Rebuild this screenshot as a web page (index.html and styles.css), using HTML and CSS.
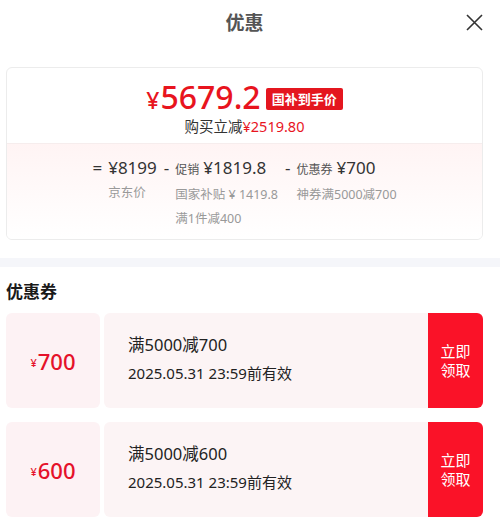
FILE: index.html
```html
<!DOCTYPE html>
<html lang="zh-CN">
<head>
    <meta charset="utf-8"/>
    <title>优惠</title>
    <link rel="stylesheet" href="styles.css">
</head>
<body>

<div class="wrap">
    <div class="header">
        <span></span>
        <div class="title">优惠</div>
        <a href="#" class="close" title="关闭">
            <svg width="17" height="17" viewBox="0 0 17 17">
                <path d="M1 1 L16 16 M16 1 L1 16" stroke="#333" stroke-width="1.6" fill="none"/>
            </svg>
        </a>
    </div>

    <div class="priceCard">
        <div class="priceTop">
            <div class="priceLine">
                <span class="bigPrice"><span class="yen">¥</span>5679.2</span>
                <span class="badge">国补到手价</span>
            </div>
            <div class="saveLine">购买立减<span class="red">¥2519.80</span></div>
        </div>
        <div class="priceBottom">
            <div class="calc">
                <div class="calcCol">
                    <span class="sign">=</span>
                    <div class="calcBody">
                        <div class="calcMain"><span class="amt">¥8199</span></div>
                        <div class="calcSub">京东价</div>
                    </div>
                </div>
                <div class="calcCol">
                    <span class="sign">-</span>
                    <div class="calcBody">
                        <div class="calcMain"><span class="lbl">促销</span><span class="amt">¥1819.8</span></div>
                        <div class="calcSub">国家补贴 ¥ 1419.8</div>
                        <div class="calcSub">满1件减400</div>
                    </div>
                </div>
                <div class="calcCol">
                    <span class="sign">-</span>
                    <div class="calcBody">
                        <div class="calcMain"><span class="lbl">优惠券</span><span class="amt">¥700</span></div>
                        <div class="calcSub">神券满5000减700</div>
                    </div>
                </div>
            </div>
        </div>
    </div>
</div>

<div class="strip"></div>

<div class="wrap">
    <div class="sectionTitle">优惠券</div>

    <div class="coupon">
        <div class="stub"><span class="cYen">¥</span><span class="cAmt">700</span></div>
        <div class="cMain">
            <div class="cName">满5000减700</div>
            <div class="cDate">2025.05.31 23:59前有效</div>
        </div>
        <a href="#" class="cBtn">立即<br>领取</a>
    </div>

    <div class="coupon">
        <div class="stub"><span class="cYen">¥</span><span class="cAmt">600</span></div>
        <div class="cMain">
            <div class="cName">满5000减600</div>
            <div class="cDate">2025.05.31 23:59前有效</div>
        </div>
        <a href="#" class="cBtn">立即<br>领取</a>
    </div>
</div>

</body>
</html>
```

FILE: styles.css
```css
body {
    margin: 0;
    font-family: "Noto Sans", "Noto Sans CJK SC", sans-serif;
    color: #333;
    background: #fff;
}

.wrap {
    padding: 0 17px 0 6px;
}

.header {
    display: grid;
    grid-template-columns: 1fr auto 1fr;
    align-items: center;
    height: 44px;
}

.title {
    font-size: 19px;
    font-weight: bold;
    color: #555;
}

.close {
    justify-self: end;
    display: flex;
    margin-top: 1px;
}

.priceCard {
    margin-top: 23px;
    border: 1px solid #ececec;
    border-radius: 6px;
    overflow: hidden;
}

.priceTop {
    padding: 12px 0 7px;
    text-align: center;
    border-bottom: 1px solid #f6eded;
}

.priceLine {
    display: flex;
    justify-content: center;
    align-items: center;
    height: 36px;
    gap: 5px;
}

.bigPrice {
    color: #e8141e;
    font-size: 32px;
    font-weight: 500;
    line-height: 36px;
}

.yen {
    font-size: 23px;
    margin-right: 1px;
}

.badge {
    background: #e4161f;
    color: #fff;
    font-size: 13px;
    font-weight: bold;
    line-height: 22px;
    padding: 0 6px;
    border-radius: 2px;
    margin-top: 2px;
}

.saveLine {
    font-size: 14.5px;
    line-height: 20px;
}

.red {
    color: #e8141e;
}

.priceBottom {
    background: linear-gradient(#fff4f4, #fff);
    padding: 13px 0 8px;
}

.calc {
    display: flex;
    justify-content: center;
    gap: 7px;
}

.calcCol {
    display: flex;
    align-items: flex-start;
}

.sign {
    font-size: 17px;
    line-height: 22px;
    margin-right: 6px;
    color: #333;
}

.calcMain {
    line-height: 22px;
    white-space: nowrap;
    margin-bottom: 2px;
}

.lbl {
    font-size: 12px;
    color: #555;
    margin-right: 4px;
}

.amt {
    font-size: 17px;
}

.calcSub {
    font-size: 12.5px;
    line-height: 24px;
    color: #999;
    white-space: nowrap;
}

.strip {
    height: 9px;
    background: #f5f6fa;
    margin-top: 18px;
}

.sectionTitle {
    font-size: 17px;
    font-weight: bold;
    color: #1a1a1a;
    line-height: 24px;
    padding-top: 13px;
    margin-bottom: 9px;
}

.coupon {
    display: flex;
    height: 95px;
    margin-bottom: 14px;
}

.stub {
    width: 94px;
    background: #fdf2f4;
    border-radius: 6px;
    display: flex;
    justify-content: center;
    align-items: center;
    color: #e5122a;
    margin-right: 4px;
}

.cYen {
    font-size: 11px;
    font-weight: 500;
    margin-top: 4px;
    margin-right: 1px;
}

.cAmt {
    font-size: 22px;
    font-weight: 500;
}

.cMain {
    flex: 1;
    background: #fcf4f5;
    border-radius: 6px 0 0 6px;
    padding: 0 0 3px 24px;
    display: flex;
    flex-direction: column;
    justify-content: center;
}

.cName {
    font-size: 16.5px;
    line-height: 28px;
    color: #222;
}

.cDate {
    font-size: 15px;
    line-height: 28px;
    color: #222;
}

.cBtn {
    width: 55px;
    background: #fa1228;
    border-radius: 0 6px 6px 0;
    color: #fff;
    text-decoration: none;
    font-size: 15px;
    line-height: 19px;
    display: flex;
    justify-content: center;
    align-items: center;
    text-align: center;
}
```
